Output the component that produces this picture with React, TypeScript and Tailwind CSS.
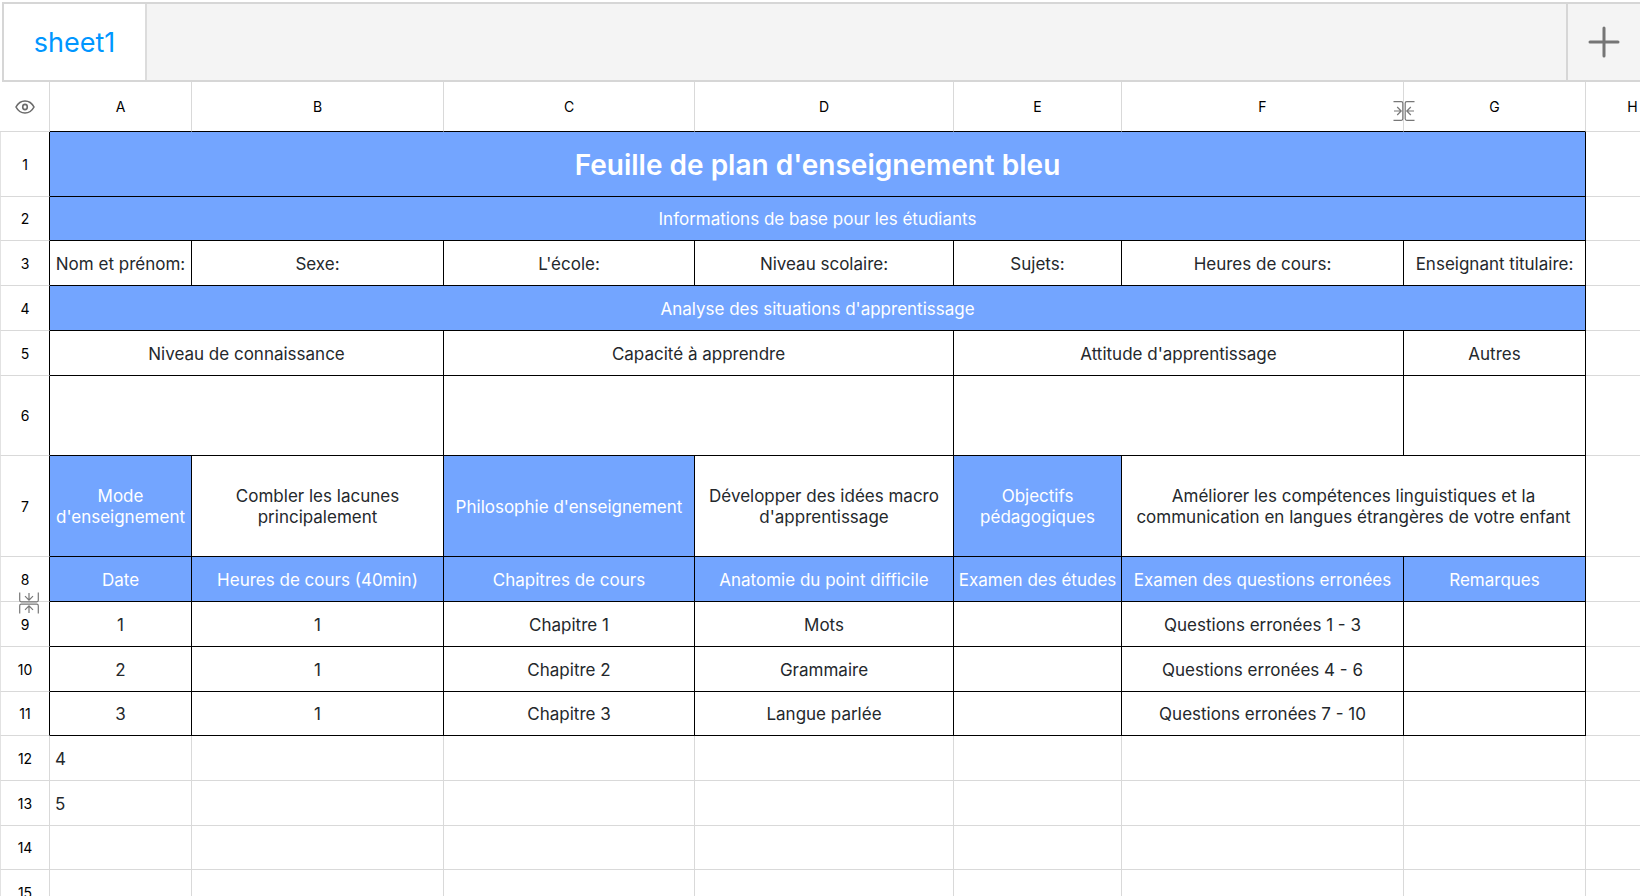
type Cell = {
	text?: string;
	span?: number;
	blue?: boolean;
	title?: boolean;
	left?: boolean;
};

type Row = { height: string; framed?: boolean; cells: Cell[] };

const COLUMNS = [
	{ name: "A", width: "w-[142px]" },
	{ name: "B", width: "w-[252px]" },
	{ name: "C", width: "w-[251px]" },
	{ name: "D", width: "w-[259px]" },
	{ name: "E", width: "w-[168px]" },
	{ name: "F", width: "w-[282px]" },
	{ name: "G", width: "w-[182px]" },
	{ name: "H", width: "w-[94px]" },
];

const EMPTY: Cell[] = [{}, {}, {}, {}, {}, {}, {}];

const ROWS: Row[] = [
	{
		height: "h-[65px]",
		framed: true,
		cells: [
			{
				text: "Feuille de plan d'enseignement bleu",
				span: 7,
				blue: true,
				title: true,
			},
		],
	},
	{
		height: "h-11",
		framed: true,
		cells: [
			{ text: "Informations de base pour les étudiants", span: 7, blue: true },
		],
	},
	{
		height: "h-[45px]",
		framed: true,
		cells: [
			{ text: "Nom et prénom:" },
			{ text: "Sexe:" },
			{ text: "L'école:" },
			{ text: "Niveau scolaire:" },
			{ text: "Sujets:" },
			{ text: "Heures de cours:" },
			{ text: "Enseignant titulaire:" },
		],
	},
	{
		height: "h-[45px]",
		framed: true,
		cells: [
			{ text: "Analyse des situations d'apprentissage", span: 7, blue: true },
		],
	},
	{
		height: "h-[45px]",
		framed: true,
		cells: [
			{ text: "Niveau de connaissance", span: 2 },
			{ text: "Capacité à apprendre", span: 2 },
			{ text: "Attitude d'apprentissage", span: 2 },
			{ text: "Autres" },
		],
	},
	{
		height: "h-20",
		framed: true,
		cells: [{ span: 2 }, { span: 2 }, { span: 2 }, {}],
	},
	{
		height: "h-[101px]",
		framed: true,
		cells: [
			{ text: "Mode\nd'enseignement", blue: true },
			{ text: "Combler les lacunes\nprincipalement" },
			{ text: "Philosophie d'enseignement", blue: true },
			{ text: "Développer des idées macro\nd'apprentissage" },
			{ text: "Objectifs\npédagogiques", blue: true },
			{
				text: "Améliorer les compétences linguistiques et la\ncommunication en langues étrangères de votre enfant",
				span: 2,
			},
		],
	},
	{
		height: "h-[45px]",
		framed: true,
		cells: [
			{ text: "Date", blue: true },
			{ text: "Heures de cours (40min)", blue: true },
			{ text: "Chapitres de cours", blue: true },
			{ text: "Anatomie du point difficile", blue: true },
			{ text: "Examen des études", blue: true },
			{ text: "Examen des questions erronées", blue: true },
			{ text: "Remarques", blue: true },
		],
	},
	{
		height: "h-[45px]",
		framed: true,
		cells: [
			{ text: "1" },
			{ text: "1" },
			{ text: "Chapitre 1" },
			{ text: "Mots" },
			{},
			{ text: "Questions erronées 1 - 3" },
			{},
		],
	},
	{
		height: "h-[45px]",
		framed: true,
		cells: [
			{ text: "2" },
			{ text: "1" },
			{ text: "Chapitre 2" },
			{ text: "Grammaire" },
			{},
			{ text: "Questions erronées 4 - 6" },
			{},
		],
	},
	{
		height: "h-11",
		framed: true,
		cells: [
			{ text: "3" },
			{ text: "1" },
			{ text: "Chapitre 3" },
			{ text: "Langue parlée" },
			{},
			{ text: "Questions erronées 7 - 10" },
			{},
		],
	},
	{
		height: "h-[45px]",
		cells: [{ text: "4", left: true }, ...EMPTY.slice(1)],
	},
	{
		height: "h-[45px]",
		cells: [{ text: "5", left: true }, ...EMPTY.slice(1)],
	},
	{ height: "h-11", cells: EMPTY },
	{ height: "h-[45px]", cells: EMPTY },
];

const EyeIcon = () => (
	<svg width="20" height="14" viewBox="0 0 20 14" fill="none" stroke="#6b6b6b" strokeWidth="1.6">
		<path d="M1 7C3 3.200 6.200 1 10 1s7 2.200 9 6c-2 3.800-5.200 6-9 6S3 10.800 1 7Z" />
		<ellipse cx="10" cy="7" rx="2.300" ry="2.600" />
	</svg>
);

const CollapseIcon = ({ className }: { className?: string }) => (
	<svg
		width="22"
		height="20"
		viewBox="0 0 22 20"
		fill="none"
		stroke="#777"
		strokeWidth="1.200"
		className={className}
	>
		<path d="M.5.700h7.800q1.500 0 1.500 1.500v15.600q0 1.500-1.500 1.500H.5" />
		<path d="M21.500.700h-7.800q-1.500 0-1.500 1.500v15.600q0 1.500 1.500 1.500h7.800" />
		<path d="M1 10h7M4.200 6l4 4-4 4M21 10h-7M17.800 6l-4 4 4 4" />
	</svg>
);

const SheetTabs = () => {
	return (
		<div className="ml-0.5 mt-0.5 flex h-20 shrink-0 border-2 border-r-0 border-[#d6d6d6] bg-[#f4f4f4]">
			<button
				type="button"
				className="w-[143px] shrink-0 border-r-2 border-[#dcdcdc] bg-white pt-0.5 text-[27px] text-[#0096ff]"
			>
				sheet1
			</button>
			<button
				type="button"
				aria-label="Ajouter une feuille"
				className="ml-auto flex w-[74px] items-center justify-center border-l-2 border-[#d6d6d6]"
			>
				<svg width="32" height="32" viewBox="0 0 32 32" stroke="#757575" strokeWidth="3" strokeLinecap="round">
					<path d="M16 2v28M2 16h28" />
				</svg>
			</button>
		</div>
	);
};

const HeaderRow = () => {
	return (
		<tr className="h-[50px]">
			<th className="border-b border-r border-[#d9d9d9] p-0">
				<button type="button" aria-label="Afficher" className="flex w-full justify-center">
					<EyeIcon />
				</button>
			</th>
			{COLUMNS.map((column) => (
				<th
					key={column.name}
					scope="col"
					className={`relative border-b border-r border-r-[#d9d9d9] p-0 text-[14px] font-normal text-black ${
						column.name === "H" ? "border-b-[#d9d9d9]" : "border-b-black"
					}`}
				>
					{column.name}
					{column.name === "F" ? (
						<button
							type="button"
							aria-label="Réduire les colonnes"
							className="absolute -right-3 top-[19px] z-10"
						>
							<CollapseIcon />
						</button>
					) : null}
				</th>
			))}
		</tr>
	);
};

const SheetRow = ({ row, number }: { row: Row; number: number }) => {
	const line = row.framed ? "border-black" : "border-[#d9d9d9]";

	return (
		<tr className={row.height}>
			<th
				scope="row"
				className={`relative border-x border-b border-b-[#d9d9d9] border-l-[#e2e2e2] p-0 text-[14px] font-normal text-black ${
					row.framed ? "border-r-black" : "border-r-[#d9d9d9]"
				}`}
			>
				{number}
				{number === 8 ? (
					<button
						type="button"
						aria-label="Réduire les lignes"
						className="absolute -bottom-3 left-[17px] z-10"
					>
						<CollapseIcon className="rotate-90" />
					</button>
				) : null}
			</th>
			{row.cells.map((cell, index) => (
				<td
					key={index}
					colSpan={cell.span}
					className={`whitespace-pre border-b border-r pb-0 pr-0 pt-0.5 ${line} ${
						cell.blue ? "bg-[#73a5ff] text-white" : "text-[#24282c]"
					} ${cell.title ? "text-[28px] font-semibold" : "text-[17px] leading-[21px]"} ${
						cell.left ? "pl-[5px] text-left" : "pl-0 text-center"
					}`}
				>
					{cell.text}
				</td>
			))}
			<td className="border-b border-r border-[#d9d9d9] p-0"></td>
		</tr>
	);
};

export default function App() {
	return (
		<div className="flex h-screen flex-col overflow-hidden bg-white font-['Inter','Liberation_Sans',sans-serif]">
			<SheetTabs />
			<main className="min-h-0 flex-1 overflow-hidden">
				<table className="w-[1680px] table-fixed border-separate border-spacing-0">
					<colgroup>
						<col className="w-[50px]" />
						{COLUMNS.map((column) => (
							<col key={column.name} className={column.width} />
						))}
					</colgroup>
					<thead>
						<HeaderRow />
					</thead>
					<tbody>
						{ROWS.map((row, index) => (
							<SheetRow key={index} row={row} number={index + 1} />
						))}
					</tbody>
				</table>
			</main>
		</div>
	);
}
